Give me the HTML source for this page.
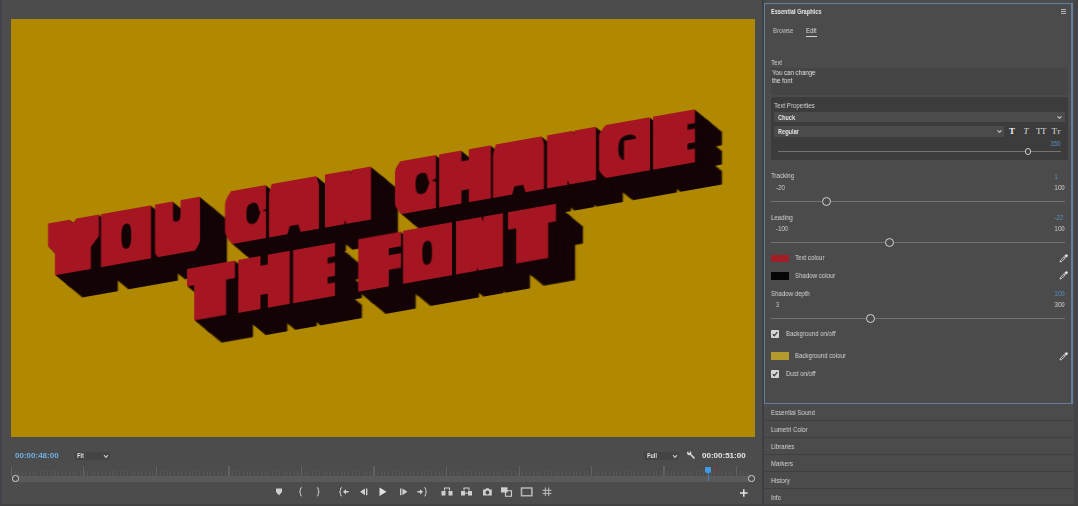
<!DOCTYPE html>
<html lang="en">
<head>
<meta charset="utf-8">
<title>Essential Graphics</title>
<style>
html,body{margin:0;padding:0}
body{width:1078px;height:506px;overflow:hidden;position:relative;background:#4b4b4b;font-family:"Liberation Sans",sans-serif;color:#d2d2d2}
div,span,svg{position:absolute;box-sizing:border-box}
.t{font-size:7px;line-height:10px;white-space:nowrap;transform:scaleX(.87);transform-origin:0 50%;color:#d4d4d4;will-change:transform}
.bd{font-weight:bold;transform:scaleX(.8)}
.r{transform-origin:100% 50%;text-align:right}
.b{color:#5b91c6}
.tc{font-size:8px;line-height:10px;font-weight:bold;white-space:nowrap;will-change:transform}
.ln{height:1px;background:#737373}
.kn{width:9px;height:9px;border-radius:50%;border:1.7px solid #d4d4d4;background:#4b4b4b}
.sep{left:764px;width:310px;height:1px;background:#404040}
#canvas{left:11px;top:19px;width:744px;height:418px;background:#b18900;overflow:hidden}
#skew{left:-11px;top:-19px;width:0;height:0;transform:matrix(1,-0.1766,0,1,0,0);transform-origin:0 0;filter:drop-shadow(1px 1px 0 #130305) drop-shadow(2px 2px 0 #130305) drop-shadow(4px 4px 0 #130305) drop-shadow(8px 8px 0 #130305) drop-shadow(12px 12px 0 #130305)}
.bl{left:0;white-space:nowrap;font-size:0;line-height:0}
.w,.w i,.w b{position:relative}
.w i{display:inline-block;vertical-align:top;overflow:hidden;height:100%;font-style:normal}
.w b{display:inline-block;vertical-align:top;font-weight:bold;color:#a61522;-webkit-text-stroke:10.0px #a61522;paint-order:stroke fill;transform-origin:0 0;white-space:pre}
</style>
</head>
<body>
<!-- program monitor -->
<div style="left:2px;top:0;width:759px;height:506px;background:#4c4c4c"></div>
<div style="left:0;top:0;width:2px;height:506px;background:#424248"></div>
<div id="canvas"><div id="skew">
<div class="bl" style="top:231.8px;height:53.5px"><span class="w"><i style="margin-left:47.8px;width:51.0px"><b style="left:-0.39px;top:-2.60px;transform:scale(1.5507,1.1146);font-size:50px;line-height:50px;-webkit-text-stroke-width:16px">Y</b></i><i style="margin-left:2.2px;width:50.0px"><b style="left:-1.48px;top:-28.87px;transform:scale(1.1754,1.9085);font-size:58px;line-height:58px;-webkit-text-stroke-width:15px">O</b></i><i style="margin-left:4.0px;width:44.6px"><b style="left:-3.58px;top:-61.76px;transform:scale(1.2372,2.2432);font-size:58px;line-height:58px;-webkit-text-stroke-width:12px">U</b></i></span> <span class="w"><i style="margin-left:25.3px;width:41.1px"><b style="left:1.71px;top:-11.45px;transform:scale(1.1526,1.3107);font-size:58px;line-height:58px;-webkit-text-stroke-width:12px">C</b></i><i style="margin-left:2.8px;width:49.8px"><b style="left:-5.18px;top:-31.61px;transform:scale(1.4390,1.7192);font-size:58px;line-height:58px;-webkit-text-stroke-width:13px">A</b></i><i style="margin-left:6.0px;width:46.7px"><b style="left:1.56px;top:-17.48px;transform:scale(1.0411,1.5169);font-size:58px;line-height:58px;-webkit-text-stroke-width:13px">N</b></i></span> <span class="w"><i style="margin-left:23.4px;width:41.1px"><b style="left:1.71px;top:-11.45px;transform:scale(1.1526,1.3107);font-size:58px;line-height:58px;-webkit-text-stroke-width:12px">C</b></i><i style="margin-left:3.0px;width:52.2px"><b style="left:1.88px;top:-20.75px;transform:scale(1.1575,1.6291);font-size:58px;line-height:58px;-webkit-text-stroke-width:11px">H</b></i><i style="margin-left:2.4px;width:51.0px"><b style="left:-5.30px;top:-31.61px;transform:scale(1.4736,1.7192);font-size:58px;line-height:58px;-webkit-text-stroke-width:13px">A</b></i><i style="margin-left:2.2px;width:49.3px"><b style="left:1.65px;top:-17.48px;transform:scale(1.0991,1.5169);font-size:58px;line-height:58px;-webkit-text-stroke-width:13px">N</b></i><i style="margin-left:3.1px;width:51.0px"><b style="left:-1.02px;top:-12.18px;transform:scale(1.3243,1.3358);font-size:58px;line-height:58px;-webkit-text-stroke-width:9px">G</b></i><i style="margin-left:2.9px;width:42.7px"><b style="left:-3.61px;top:-7.99px;transform:scale(2.6161,1.1914);font-size:58px;line-height:58px;-webkit-text-stroke-width:5px">E</b></i></span></div>
<div class="bl" style="top:302.0px;height:53.2px"><span class="w"><i style="margin-left:186.6px;width:48.0px"><b style="left:-5.21px;top:-3.87px;transform:scale(1.6477,1.0451);font-size:58px;line-height:58px;-webkit-text-stroke-width:11px">T</b></i><i style="margin-left:3.1px;width:51.9px"><b style="left:1.86px;top:-20.63px;transform:scale(1.1508,1.6199);font-size:58px;line-height:58px;-webkit-text-stroke-width:11px">H</b></i><i style="margin-left:3.1px;width:42.7px"><b style="left:-3.61px;top:-7.94px;transform:scale(2.6161,1.1848);font-size:58px;line-height:58px;-webkit-text-stroke-width:5px">E</b></i></span> <span class="w"><i style="margin-left:22.8px;width:42.4px"><b style="left:-1.90px;top:-7.19px;transform:scale(2.1544,1.1590);font-size:58px;line-height:58px;-webkit-text-stroke-width:6px">F</b></i><i style="margin-left:2.1px;width:49.5px"><b style="left:-1.47px;top:-28.71px;transform:scale(1.1637,1.8978);font-size:58px;line-height:58px;-webkit-text-stroke-width:15px">O</b></i><i style="margin-left:3.8px;width:47.5px"><b style="left:1.59px;top:-17.38px;transform:scale(1.0590,1.5084);font-size:58px;line-height:58px;-webkit-text-stroke-width:13px">N</b></i><i style="margin-left:4.4px;width:48.1px"><b style="left:-5.22px;top:-3.87px;transform:scale(1.6511,1.0451);font-size:58px;line-height:58px;-webkit-text-stroke-width:11px">T</b></i></span></div>
</div></div>

<div class="tc" style="left:15px;top:451px;color:#6fb1e6">00:00:48:00</div>
<div style="left:75px;top:452px;width:35px;height:8px;background:#444;border-radius:1px"></div>
<div class="t bd" style="left:77px;top:451px;color:#e0e0e0">Fit</div>
<svg style="left:103px;top:453.5px" width="6" height="5" viewBox="0 0 6 5"><path d="M1 1.2 L3 3.4 L5 1.2" fill="none" stroke="#ccc" stroke-width="1.1"/></svg>

<div style="left:644px;top:452px;width:35px;height:8px;background:#444;border-radius:1px"></div>
<div class="t bd" style="left:646.5px;top:451px;color:#e0e0e0">Full</div>
<svg style="left:672px;top:453.5px" width="6" height="5" viewBox="0 0 6 5"><path d="M1 1.2 L3 3.4 L5 1.2" fill="none" stroke="#ccc" stroke-width="1.1"/></svg>
<svg style="left:686px;top:450px" width="10" height="10" viewBox="0 0 10 10"><path d="M2.2 1.2 A2.4 2.4 0 0 0 1.6 4.6 A2.4 2.4 0 0 0 4.2 4.9 L7.8 8.9 L9 7.7 L5.2 4 A2.4 2.4 0 0 0 4.3 1 L3.9 2.8 L2.6 2.9 Z" fill="#d8d8d8"/></svg>
<div class="tc" style="left:702px;top:451px;color:#e6e6e6">00:00:51:00</div>

<!-- time ruler -->
<div id="ticks" style="left:11px;top:471px;width:737px;height:5px;background:repeating-linear-gradient(90deg,#5e5e5e 0 1px,transparent 1px 3.625px);opacity:.55"></div>
<div style="left:11px;top:466px;width:737px;height:10px;background:repeating-linear-gradient(90deg,#666 0 1px,transparent 1px 72.5px);opacity:.8"></div>
<div style="left:12px;top:475.5px;width:738px;height:6px;background:#5a5a5a"></div>
<div class="kn" style="left:12px;top:475px;width:6.6px;height:6.6px;background:#4b4b4b"></div>
<div class="kn" style="left:748px;top:475px;width:6.6px;height:6.6px;background:#4b4b4b"></div>
<div style="left:705px;top:467px;width:6px;height:6px;background:#3f9bea;border-radius:1px 1px 2px 2px"></div>
<div style="left:707.5px;top:473px;width:1px;height:8px;background:#3f7fb8"></div>
<div style="left:714px;top:466px;width:1px;height:7px;background:#8a3b3b"></div>

<!-- transport icons -->
<svg id="icons" style="left:260px;top:482px" width="500" height="22" viewBox="260 482 500 22" fill="#cfcfcf" stroke="none">
 <path d="M276 488.5 h6 v3.5 l-3 3.2 l-3 -3.2 z"/>
 <path d="M301.8 487.6 q-1.4 0 -1.4 1.3 v1.6 q0 1.2 -1.1 1.3 q1.1 .1 1.1 1.3 v1.6 q0 1.3 1.4 1.3" fill="none" stroke="#cfcfcf" stroke-width="1"/>
 <path d="M316.9 487.6 q1.4 0 1.4 1.3 v1.6 q0 1.2 1.1 1.3 q-1.1 .1 -1.1 1.3 v1.6 q0 1.3 -1.4 1.3" fill="none" stroke="#cfcfcf" stroke-width="1"/>
 <path d="M341.9 487.6 q-1.4 0 -1.4 1.3 v1.6 q0 1.2 -1.1 1.3 q1.1 .1 1.1 1.3 v1.6 q0 1.3 1.4 1.3" fill="none" stroke="#cfcfcf" stroke-width="1"/>
 <path d="M343 491.8 l3 -2.6 v1.9 h2.6 v1.4 h-2.6 v1.9 z"/>
 <path d="M360 491.8 l5 -3.4 v6.8 z M366 488.4 h1.4 v6.8 h-1.4 z"/>
 <path d="M379.5 487.6 l7 4.2 l-7 4.2 z" fill="#e2e2e2"/>
 <path d="M400 488.4 h1.4 v6.8 h-1.4 z M402.4 488.4 l5 3.4 l-5 3.4 z"/>
 <path d="M423 491.8 l-3 -2.6 v1.9 h-2.6 v1.4 h2.6 v1.9 z"/>
 <path d="M424.3 487.6 q1.4 0 1.4 1.3 v1.6 q0 1.2 1.1 1.3 q-1.1 .1 -1.1 1.3 v1.6 q0 1.3 -1.4 1.3" fill="none" stroke="#cfcfcf" stroke-width="1"/>
 <path d="M441.5 491 h4 v4.5 h-4 z M448.5 491 h4 v4.5 h-4 z M444 487.5 h6 v3 h-1 v-2 h-4 v2 h-1 z"/>
 <path d="M461 491 h4 v4.5 h-4 z M468 491 h4 v4.5 h-4 z M463.5 487.5 h6 v3 h-1 v-2 h-4 v2 h-1 z M465.3 492.6 h2.4 v1.2 h-2.4 z"/>
 <path d="M483 489.5 h2.2 l0.9 -1.3 h2.6 l0.9 1.3 h2.2 v6 h-8.8 z M487.4 490.6 a1.9 1.9 0 1 0 0.01 0 z" fill-rule="evenodd"/>
 <path d="M501 487.3 h6.5 v5.2 h-6.5 z"/>
 <path d="M505.5 490.8 h6 v5.4 h-6 z" fill="none" stroke="#cfcfcf" stroke-width="1.1"/>
 <path d="M521.5 488 h10.4 v7.8 h-10.4 z" fill="none" stroke="#b4b4b4" stroke-width="1.6"/>
 <path d="M545.3 487.5 v8.6 M548.7 487.5 v8.6 M542.5 490.3 h9 M542.5 493.4 h9" fill="none" stroke="#c8c8c8" stroke-width="0.9"/>
 <path d="M743.8 489.2 v7.6 M740 493 h7.6" fill="none" stroke="#e4e4e4" stroke-width="1.5"/>
</svg>

<!-- divider between panels -->
<div style="left:762px;top:0;width:2px;height:506px;background:#3f3f46"></div>
<div style="left:1074px;top:0;width:4px;height:506px;background:#444448"></div>

<!-- Essential Graphics panel -->
<div id="eg" style="left:764px;top:3px;width:309px;height:401px;border:1px solid #637f9c;border-right-width:2px;background:#4b4b4b;box-shadow:inset 0 1px 0 rgba(70,90,115,.35)"></div>
<div class="t bd" style="left:771px;top:6.8px;color:#e8e8e8">Essential Graphics</div>
<div style="left:1061px;top:9.3px;width:5px;height:1px;background:#b4b4b4;box-shadow:0 2px 0 #b4b4b4,0 4px 0 #b4b4b4"></div>
<div class="t" style="left:772.5px;top:25.8px;color:#c4c4c4">Browse</div>
<div class="t" style="left:806px;top:25.8px;color:#dedede">Edit</div>
<div style="left:806px;top:36px;width:10.5px;height:1px;background:#d0d0d0"></div>

<div class="t" style="left:771px;top:58px">Text</div>
<div style="left:770.5px;top:68px;width:297.5px;height:26.5px;background:#454545"></div>
<div class="t" style="left:772.2px;top:67.8px;color:#e2e2e2">You can change</div>
<div class="t" style="left:772.2px;top:76.2px;color:#e2e2e2">the font</div>

<div style="left:770.5px;top:97.2px;width:297.5px;height:62.6px;background:#3c3c3c;border-radius:2px"></div>
<div class="t" style="left:774.3px;top:101.3px">Text Properties</div>
<div style="left:774.3px;top:111.5px;width:290.6px;height:10.8px;background:#4b4b4b;border-radius:1px"></div>
<div class="t bd" style="left:778px;top:112.5px;color:#e6e6e6">Chuck</div>
<svg style="left:1056px;top:114.5px" width="7" height="5" viewBox="0 0 7 5"><path d="M1.5 1.3 L3.5 3.3 L5.5 1.3" fill="none" stroke="#ccc" stroke-width="1.1"/></svg>
<div style="left:774.3px;top:126px;width:229.7px;height:11.3px;background:#4b4b4b;border-radius:1px"></div>
<div class="t bd" style="left:778px;top:126.7px;color:#e6e6e6">Regular</div>
<svg style="left:995.5px;top:129.3px" width="7" height="5" viewBox="0 0 7 5"><path d="M1.5 1.3 L3.5 3.3 L5.5 1.3" fill="none" stroke="#ccc" stroke-width="1.1"/></svg>
<div class="ti" style="left:1008px;top:126px;width:8px;height:11px;font:bold 9px/11px 'Liberation Serif',serif;color:#eee;text-align:center">T</div>
<div class="ti" style="left:1022px;top:126px;width:8px;height:11px;font:italic 9px/11px 'Liberation Serif',serif;color:#ddd;text-align:center">T</div>
<div class="ti" style="left:1035px;top:126px;width:12px;height:11px;font:9px/11px 'Liberation Serif',serif;color:#ddd;text-align:center;letter-spacing:-.5px">TT</div>
<div class="ti" style="left:1050px;top:126px;width:12px;height:11px;font:9px/11px 'Liberation Serif',serif;color:#ddd;text-align:center;letter-spacing:-.5px">T<span style="position:static;font-size:7px">T</span></div>
<div class="t r b" style="right:17px;top:139px">350</div>
<div class="ln" style="left:777.8px;top:151px;width:283.3px"></div>
<div class="kn" style="left:1024.5px;top:148px;width:6.6px;height:6.6px;background:#3c3c3c"></div>

<div class="t" style="left:771px;top:171.2px">Tracking</div>
<div class="t r b" style="right:20.5px;top:172.2px">1</div>
<div class="t" style="left:775.5px;top:183.1px">-20</div>
<div class="t r" style="right:13.5px;top:183px">100</div>
<div class="ln" style="left:771px;top:201px;width:293.5px"></div>
<div class="kn" style="left:822.1px;top:196.9px"></div>

<div class="t" style="left:771px;top:212.8px">Leading</div>
<div class="t r b" style="right:15px;top:212.9px">-22</div>
<div class="t" style="left:775.5px;top:224px">-100</div>
<div class="t r" style="right:13.5px;top:223.8px">100</div>
<div class="ln" style="left:771px;top:241.6px;width:293.5px"></div>
<div class="kn" style="left:885.1px;top:237.6px"></div>

<div style="left:771px;top:254.8px;width:17.7px;height:7.5px;background:#a21d24;border-radius:1px"></div>
<div class="t" style="left:795px;top:253.2px">Text colour</div>
<div style="left:771px;top:272px;width:17.7px;height:7.5px;background:#050505"></div>
<div class="t" style="left:795px;top:270.8px">Shadow colour</div>
<svg class="ed" style="left:1059px;top:254px" width="9" height="9" viewBox="0 0 9 9"><path d="M1 8 L1.4 6.4 L5 2.8 L6.2 4 L2.6 7.6 Z" fill="none" stroke="#ddd" stroke-width=".9"/><path d="M5.2 2 L7 3.8 L8.4 2.4 A1.2 1.2 0 0 0 6.6 .6 Z" fill="#ddd"/></svg>
<svg class="ed" style="left:1059px;top:271.3px" width="9" height="9" viewBox="0 0 9 9"><path d="M1 8 L1.4 6.4 L5 2.8 L6.2 4 L2.6 7.6 Z" fill="none" stroke="#ddd" stroke-width=".9"/><path d="M5.2 2 L7 3.8 L8.4 2.4 A1.2 1.2 0 0 0 6.6 .6 Z" fill="#ddd"/></svg>

<div class="t" style="left:771px;top:288.8px">Shadow depth</div>
<div class="t r b" style="right:13.5px;top:288.8px">100</div>
<div class="t" style="left:776px;top:300px">3</div>
<div class="t r" style="right:13.5px;top:299.6px">300</div>
<div class="ln" style="left:771px;top:318px;width:293.5px"></div>
<div class="kn" style="left:866.4px;top:313.9px"></div>

<div class="cb" style="left:770.7px;top:329.8px;width:8px;height:8px;background:#d6d6d6;border-radius:1px"></div>
<svg style="left:770.7px;top:329.8px" width="8" height="8" viewBox="0 0 8 8"><path d="M1.8 4.2 L3.3 5.8 L6.3 2.2" fill="none" stroke="#3a3a3a" stroke-width="1.3"/></svg>
<div class="t" style="left:785.6px;top:328.8px">Background on/off</div>

<div style="left:771px;top:352.3px;width:17.7px;height:8px;background:#b29a2c"></div>
<div class="t" style="left:795px;top:351.4px">Background colour</div>
<svg class="ed" style="left:1059px;top:351.8px" width="9" height="9" viewBox="0 0 9 9"><path d="M1 8 L1.4 6.4 L5 2.8 L6.2 4 L2.6 7.6 Z" fill="none" stroke="#ddd" stroke-width=".9"/><path d="M5.2 2 L7 3.8 L8.4 2.4 A1.2 1.2 0 0 0 6.6 .6 Z" fill="#ddd"/></svg>

<div class="cb" style="left:770.7px;top:369.6px;width:8px;height:8px;background:#d6d6d6;border-radius:1px"></div>
<svg style="left:770.7px;top:369.6px" width="8" height="8" viewBox="0 0 8 8"><path d="M1.8 4.2 L3.3 5.8 L6.3 2.2" fill="none" stroke="#3a3a3a" stroke-width="1.3"/></svg>
<div class="t" style="left:785.6px;top:368.6px">Dust on/off</div>

<!-- collapsed panels -->
<div class="t" style="left:771.2px;top:407.8px">Essential Sound</div>
<div class="sep" style="top:420px"></div>
<div class="t" style="left:771.2px;top:424.9px">Lumetri Color</div>
<div class="sep" style="top:437px"></div>
<div class="t" style="left:771.2px;top:442px">Libraries</div>
<div class="sep" style="top:454px"></div>
<div class="t" style="left:771.2px;top:459px">Markers</div>
<div class="sep" style="top:471px"></div>
<div class="t" style="left:771.2px;top:475.9px">History</div>
<div class="sep" style="top:488px"></div>
<div class="t" style="left:771.2px;top:492.5px">Info</div>
<div style="left:0;top:504px;width:1078px;height:2px;background:#424242"></div>
</body>
</html>
